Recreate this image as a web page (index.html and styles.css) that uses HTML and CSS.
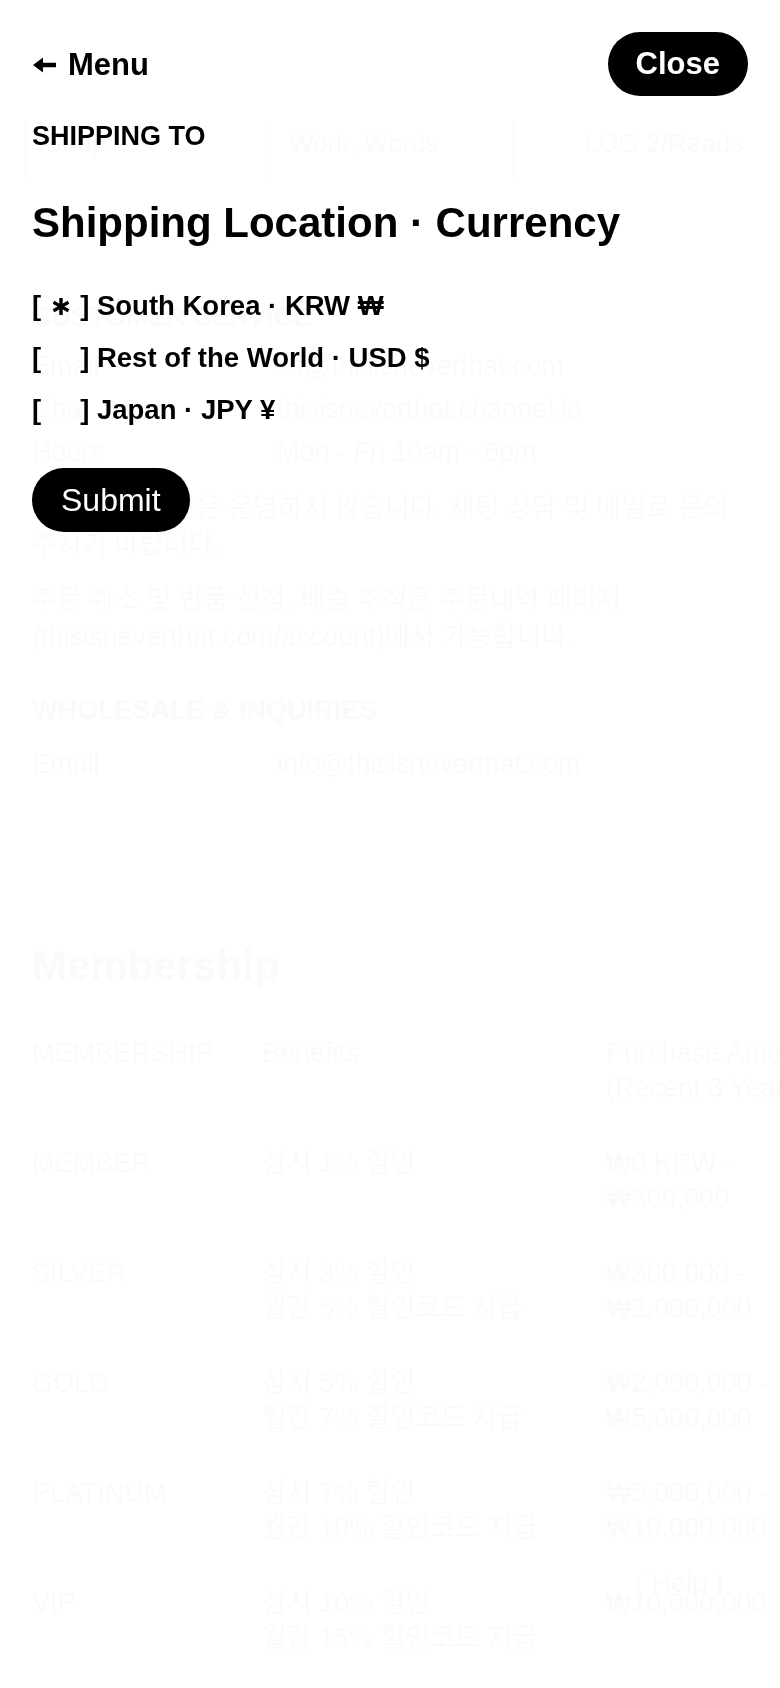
FILE: index.html
```html
<!DOCTYPE html>
<html lang="en">
<head>
    <meta charset="UTF-8">
    <meta name="viewport" content="width=device-width, initial-scale=1.0">
    <title>Shipping Location</title>
    <link rel="stylesheet" href="styles.css">
</head>
<body>
    <div class="page">
        <div class="strip">
            <div class="strip-cell">Shop</div>
            <div class="strip-cell">Work, Words</div>
            <div class="strip-cell strip-right">LOG 2/Reads</div>
        </div>

        <section class="info">
            <h3 class="label">CUSTOMER SERVICE</h3>
            <div class="info-row"><span>Email</span><span>cs@thisisneverthat.com</span></div>
            <div class="info-row"><span>Chat</span><span>thisisneverthat.channel.io</span></div>
            <div class="info-row"><span>Hours</span><span>Mon - Fri 10am - 6pm</span></div>
            <p class="note">주말 및 공휴일은 운영하지 않습니다. 채팅 상담 및 메일로 문의 주시기 바랍니다.</p>
            <p class="note">주문 취소 및 반품 신청, 배송 추적은 주문내역 페이지 (thisisneverthat.com/account)에서 가능합니다.</p>

            <h3 class="label label-gap">WHOLESALE &amp; INQUIRIES</h3>
            <div class="info-row"><span>Email</span><span>info@thisisneverthat.com</span></div>
        </section>

        <section class="membership">
            <h2 class="section-title">Membership</h2>
            <div class="tier-table">
                <div>MEMBERSHIP</div><div>Benefits</div><div>Purchase Amount<br>(Recent 3 Years)</div>
                <div>MEMBER</div><div>상시 1% 할인</div><div>₩0 KRW -<br>₩300,000</div>
                <div>SILVER</div><div>상시 3% 할인<br>월간 5% 할인코드 지급</div><div>₩300,000 -<br>₩2,000,000</div>
                <div>GOLD</div><div>상시 5% 할인<br>월간 7% 할인코드 지급</div><div>₩2,000,000 -<br>₩5,000,000</div>
                <div>PLATINUM</div><div>상시 7% 할인<br>월간 10% 할인코드 지급</div><div>₩5,000,000 -<br>₩10,000,000</div>
                <div>VIP</div><div>상시 10% 할인<br>월간 15% 할인코드 지급</div><div>₩10,000,000 -</div>
            </div>
        </section>

        <button class="help-btn">( Help )</button>
    </div>

    <div class="menu-overlay">
        <div class="menu-top">
            <a class="back-link" href="#">
                <svg class="back-arrow" width="23" height="16" viewBox="0 0 23 16">
                    <path d="M0 8 L10 0.5 L10 5.8 L23 5.8 L23 10.2 L10 10.2 L10 15.5 Z" fill="#000"/>
                </svg>
                Menu
            </a>
            <button class="pill-btn close-btn">Close</button>
        </div>

        <div class="menu-body">
            <div class="menu-label">SHIPPING TO</div>
            <h1 class="menu-title">Shipping Location · Currency</h1>

            <ul class="options">
                <li class="option">[<span class="mark"><svg width="18" height="17" viewBox="0 0 18 17"><g stroke="#000" stroke-width="3.4"><line x1="9" y1="0" x2="9" y2="17"/><line x1="1.5" y1="4.2" x2="16.5" y2="12.8"/><line x1="1.5" y1="12.8" x2="16.5" y2="4.2"/></g></svg></span>] South Korea · KRW ₩</li>
                <li class="option">[<span class="mark"></span>] Rest of the World · USD $</li>
                <li class="option">[<span class="mark"></span>] Japan · JPY ¥</li>
            </ul>

            <button class="pill-btn submit-btn">Submit</button>
        </div>
    </div>
</body>
</html>
```

FILE: styles.css
```css
body {
    margin: 0;
    font-family: "Liberation Sans", Arial, "Noto Sans CJK KR", sans-serif;
    font-size: 27px;
    color: #000;
    background: #fff;
    overflow-x: hidden;
}

/* page behind the menu */
.page {
    position: relative;
    padding-top: 120px;
    min-height: 1688px;
    box-sizing: border-box;
}
.strip {
    display: grid;
    grid-template-columns: 244px 244px 242px;
    margin: 0 25px;
    height: 60px;
}
.strip-cell {
    border-left: 1px solid #000;
    padding: 8px 19px 0;
    font-size: 26px;
}
.strip-right {
    text-align: right;
    padding-right: 12px;
}
.info {
    padding: 119px 32px 0;
}
.label {
    font-size: 27px;
    font-weight: bold;
    margin: 0 0 10px;
    line-height: 36px;
}
.label-gap {
    margin-top: 36px;
    margin-bottom: 15px;
}
.info-row {
    display: grid;
    grid-template-columns: 245px 1fr;
    line-height: 43px;
}
.note {
    margin: 16px 0 0;
    line-height: 37px;
    max-width: 700px;
}
.note + .note {
    margin-top: 18px;
}
.membership {
    padding: 155px 32px 0;
}
.section-title {
    font-size: 42px;
    margin: 0 0 45px;
    line-height: 50px;
}
.tier-table {
    display: grid;
    grid-template-columns: 230px 344px 230px;
    row-gap: 40px;
    line-height: 35px;
    width: 804px;
}
.help-btn {
    position: absolute;
    left: 635px;
    top: 1568px;
    border: none;
    background: none;
    font: inherit;
    padding: 0;
}

/* shipping menu overlay */
.menu-overlay {
    position: fixed;
    inset: 0;
    background: rgba(255, 255, 255, 0.982);
    padding: 32px;
}
.menu-top {
    display: flex;
    justify-content: space-between;
    align-items: center;
    height: 64px;
}
.back-link {
    display: flex;
    align-items: center;
    gap: 12px;
    color: #000;
    text-decoration: none;
    font-size: 31px;
    font-weight: bold;
    padding-top: 2px;
}
.back-arrow {
    margin-left: 1px;
}
.pill-btn {
    height: 64px;
    border: none;
    border-radius: 32px;
    background: #000;
    color: #fff;
    font-family: inherit;
    cursor: pointer;
}
.close-btn {
    font-size: 31px;
    font-weight: bold;
    padding: 0 28px;
}
.menu-label {
    margin-top: 24px;
    font-size: 27px;
    font-weight: bold;
    line-height: 32px;
}
.menu-title {
    margin: 47px 0 0;
    font-size: 42px;
    line-height: 48px;
}
.options {
    list-style: none;
    margin: 33px 0 0;
    padding: 0;
}
.option {
    font-size: 27.5px;
    font-weight: bold;
    line-height: 52px;
}
.mark {
    display: inline-block;
    width: 39px;
    text-align: center;
}
.submit-btn {
    margin-top: 32px;
    font-size: 32px;
    padding: 0 29px;
}
```
